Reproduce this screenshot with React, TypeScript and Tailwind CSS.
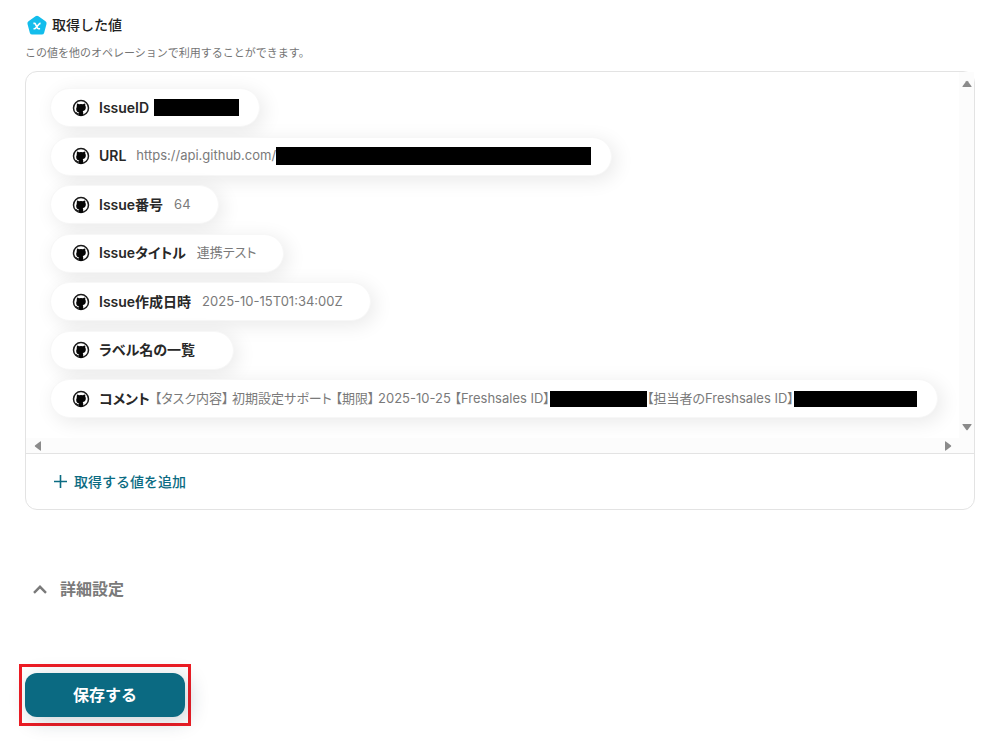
import type { ReactNode } from 'react';
import { clsx } from 'clsx';

interface Field {
  label: string;
  value?: ReactNode;
  className?: string;
}

function Redacted({ className }: { className: string }) {
  return <span className={clsx('inline-block shrink-0 bg-black', className)} />;
}

const fields: Field[] = [
  { label: 'IssueID', value: <Redacted className="h-[17px] w-[85px]" />, className: 'gap-[5px] pr-5' },
  {
    label: 'URL',
    value: (
      <>
        https://api.github.com/
        <Redacted className="h-[18px] w-[315px]" />
      </>
    ),
    className: 'gap-[10px] pr-5',
  },
  { label: 'Issue番号', value: '64' },
  { label: 'Issueタイトル', value: '連携テスト' },
  { label: 'Issue作成日時', value: '2025-10-15T01:34:00Z' },
  { label: 'ラベル名の一覧' },
  {
    label: 'コメント',
    value: (
      <>
        【タスク内容】 初期設定サポート 【期限】 2025-10-25 【Freshsales ID】
        <Redacted className="h-4 w-[97px]" />
        【担当者のFreshsales ID】
        <Redacted className="h-4 w-[123px]" />
      </>
    ),
    className: 'gap-[5px] pr-5',
  },
];

function GithubIcon() {
  return (
    <svg viewBox="0 0 18 18" className="size-[18px] shrink-0" aria-hidden="true">
      <circle cx="9" cy="9" r="7.5" fill="none" stroke="#1b1b1b" strokeWidth="1.5" />
      <path
        fill="#050505"
        d="M4.900 4.500c.9 0 1.600.4 2.100.8a8 8 0 0 1 4 0c.5-.4 1.200-.8 2.100-.8.3.7.3 1.300.1 1.900.5.6.6 1.200.6 2.100 0 2.300-1.200 3.200-3.100 3.500.4.400.5.900.5 1.400v3.200a8 8 0 0 1-4.400 0v-1.500c-1.400.3-2.100-.2-2.500-1-.2-.4-.4-.7-.9-1 .8-.3 1.300.1 1.700.7.4.6.9.7 1.700.5.1-.3.2-.6.500-.8-1.900-.3-3.100-1.200-3.100-3.500 0-.9.1-1.500.6-2.100-.2-.6-.2-1.200.1-1.900z"
      />
    </svg>
  );
}

function FieldPill({ label, value, className }: Field) {
  return (
    <li
      className={clsx(
        'flex h-[39px] items-center rounded-full border border-[#f7f7f7] bg-white pl-[21px] shadow-[4px_4px_20px_rgba(0,0,0,0.09)]',
        className ?? 'gap-[11px] pr-[27px]',
      )}
    >
      <div className="flex items-center gap-[9px] whitespace-nowrap text-sm font-semibold text-[#282828]">
        <GithubIcon />
        {label}
      </div>
      <div className="flex items-center whitespace-pre text-[13px] text-[#7a7a7a]">{value}</div>
    </li>
  );
}

const arrows = {
  up: 'M4.2 1.2 0.5 6.2Q0 7 1 7H9Q10 7 9.5 6.2L5.8 1.2Q5 .2 4.2 1.2z',
  down: 'M4.2 6.8 0.5 1.8Q0 1 1 1H9Q10 1 9.5 1.8L5.8 6.8Q5 7.8 4.2 6.8z',
  left: 'M1.2 4.2 6.2 .5Q7 0 7 1V9Q7 10 6.2 9.5L1.2 5.8Q.2 5 1.2 4.2z',
  right: 'M6.8 4.2 1.8 .5Q1 0 1 1V9Q1 10 1.8 9.5L6.8 5.8Q7.8 5 6.8 4.2z',
};

function ScrollButton({ direction }: { direction: keyof typeof arrows }) {
  const vertical = direction === 'up' || direction === 'down';
  return (
    <button type="button" aria-label={direction} className="flex size-[15px] items-center justify-center">
      <svg
        viewBox={vertical ? '0 0 10 8' : '0 0 8 10'}
        className={vertical ? 'h-2 w-[10px]' : 'h-[10px] w-2'}
        fill="#8b8b8b"
      >
        <path d={arrows[direction]} />
      </svg>
    </button>
  );
}

export default function App() {
  return (
    <main className="min-h-screen overflow-hidden bg-white pt-[14px] pr-[27px] pb-4 pl-[25px] font-['Inter','Noto_Sans_CJK_JP',sans-serif]">
      <header>
        <h2 className="flex h-[22px] items-center gap-[5px] pl-px text-sm font-medium text-[#222]">
          <svg viewBox="0 0 21 21" className="size-[21px]" aria-hidden="true">
            <path
              fill="#13bdec"
              d="M9.500 1.300Q11 .3 12.500 1.300L19.500 6.300Q21 7.400 20.500 9L18.100 17.900Q17.600 19.600 15.800 19.600H6.200Q4.400 19.600 3.900 17.900L1.500 9Q1 7.400 2.500 6.300z"
            />
            <path
              d="M7.400 8.400h.9q.9 0 1.300.9l1.700 3.500q.4.900 1.300.9h1.500M14.600 8.400q-1 0-1.700.9l-2.900 3.500q-.7.900-1.800.9h-.7"
              fill="none"
              stroke="#fff"
              strokeWidth="1.600"
            />
          </svg>
          取得した値
        </h2>
        <p className="mt-2 text-[11px] leading-[18px] text-[#757575]">
          この値を他のオペレーションで利用することができます。
        </p>
      </header>

      <section className="mt-[9px] rounded-xl border border-[#e3e3e3]">
        <div className="grid grid-cols-[1fr_15px] grid-rows-[366px_15px] border-b border-[#e3e3e3]">
          <div className="overflow-hidden px-6 pt-4">
            <ul className="flex h-[330px] flex-col items-start justify-between [font-feature-settings:'palt']">
              {fields.map((field) => (
                <FieldPill key={field.label} {...field} />
              ))}
            </ul>
          </div>
          <div className="flex flex-col justify-between bg-[#fcfcfc] pt-1 pb-1">
            <ScrollButton direction="up" />
            <ScrollButton direction="down" />
          </div>
          <div className="flex items-center justify-between bg-[#fcfcfc] px-1">
            <ScrollButton direction="left" />
            <ScrollButton direction="right" />
          </div>
          <div className="bg-[#fcfcfc]" />
        </div>
        <button
          type="button"
          className="flex h-[55px] items-center gap-[7px] px-7 text-sm font-medium text-[#0b6b82]"
        >
          <svg viewBox="0 0 13 13" className="size-[13px]" aria-hidden="true">
            <path d="M6.500 0v13M0 6.500h13" stroke="currentColor" strokeWidth="1.600" />
          </svg>
          取得する値を追加
        </button>
      </section>

      <button
        type="button"
        className="mt-[67px] flex h-6 items-center gap-[13px] pl-2 text-base font-semibold text-[#7a7a7a]"
      >
        <svg viewBox="0 0 14 9" className="h-[9px] w-[14px]" aria-hidden="true">
          <path d="M1 7.800 7 1.800l6 6" fill="none" stroke="currentColor" strokeWidth="2.400" />
        </svg>
        詳細設定
      </button>

      <div className="-ml-[6px] mt-[63px] w-fit border-3 border-[#ed1c24] px-[3px] pt-[6px] pb-[6px]">
        <button
          type="submit"
          className="flex h-11 w-40 items-center justify-center rounded-xl bg-[#0b6a82] text-base font-bold text-white shadow-[4px_4px_20px_rgba(20,50,70,0.22)]"
        >
          保存する
        </button>
      </div>
    </main>
  );
}
